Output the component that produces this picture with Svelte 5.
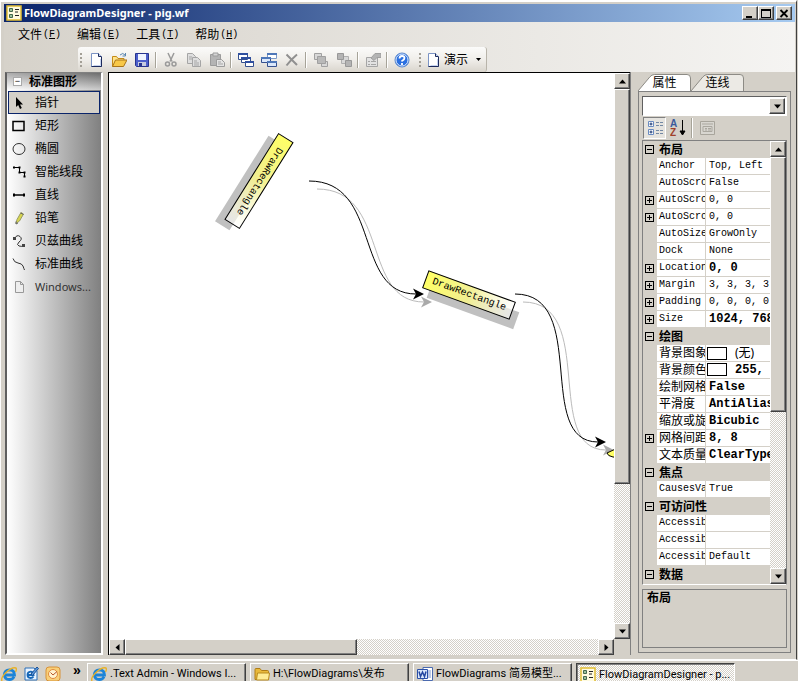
<script>
    let activeTool = $state(0);
    let activeTab = $state(0);

    const menus = [
        { label: '文件', key: 'F' },
        { label: '编辑', key: 'E' },
        { label: '工具', key: 'T' },
        { label: '帮助', key: 'H' }
    ];

    const toolbar = [
        ['new', 'open', 'save'],
        ['cut', 'copy', 'paste'],
        ['cascade', 'tile', 'delete'],
        ['front', 'back'],
        ['props'],
        ['help']
    ];

    const tools = [
        { icon: 'pointer', label: '指针' },
        { icon: 'rect', label: '矩形' },
        { icon: 'ellipse', label: '椭圆' },
        { icon: 'smart', label: '智能线段' },
        { icon: 'line', label: '直线' },
        { icon: 'pencil', label: '铅笔' },
        { icon: 'bezier', label: '贝兹曲线' },
        { icon: 'curve', label: '标准曲线' },
        { icon: 'page', label: 'Windows...' }
    ];

    const shapes = [
        { x: 150, y: 108, w: 101, h: 17, angle: 122, sx: -10, sy: 2 },
        { x: 360, y: 222, w: 92, h: 18, angle: 20, sx: 4, sy: 10 }
    ];

    const links = [
        { d: 'M200 108C273 108 244 221 307 221', x: 315, y: 221 },
        { d: 'M406 221C481 221 425 369 489 369', x: 497, y: 369 }
    ];

    const groups = [
        { name: '布局', rows: [
            { name: 'Anchor', value: 'Top, Left' },
            { name: 'AutoScroll', value: 'False' },
            { name: 'AutoScrollMargin', value: '0, 0', plus: true },
            { name: 'AutoScrollMinSize', value: '0, 0', plus: true },
            { name: 'AutoSizeMode', value: 'GrowOnly' },
            { name: 'Dock', value: 'None' },
            { name: 'Location', value: '0, 0', plus: true, bold: true },
            { name: 'Margin', value: '3, 3, 3, 3', plus: true },
            { name: 'Padding', value: '0, 0, 0, 0', plus: true },
            { name: 'Size', value: '1024, 768', plus: true, bold: true }
        ] },
        { name: '绘图', rows: [
            { name: '背景图象', value: '(无)', swatch: true, cjk: true },
            { name: '背景颜色', value: '255,', swatch: true, bold: true },
            { name: '绘制网格', value: 'False', bold: true },
            { name: '平滑度', value: 'AntiAlias', bold: true },
            { name: '缩放或旋转', value: 'Bicubic', bold: true },
            { name: '网格间距', value: '8, 8', plus: true, bold: true },
            { name: '文本质量', value: 'ClearType', bold: true }
        ] },
        { name: '焦点', rows: [
            { name: 'CausesValidation', value: 'True' }
        ] },
        { name: '可访问性', rows: [
            { name: 'AccessibleDescription', value: '' },
            { name: 'AccessibleName', value: '' },
            { name: 'AccessibleRole', value: 'Default' }
        ] },
        { name: '数据', rows: [] }
    ];

    const tasks = [
        { icon: 'ie', label: '.Text Admin - Windows I...' },
        { icon: 'folder', label: 'H:\\FlowDiagrams\\发布' },
        { icon: 'word', label: 'FlowDiagrams 简易模型...' },
        { icon: 'app', label: 'FlowDiagramDesigner - p...', active: true }
    ];
</script>

{#snippet icon(name)}
    <svg class="icon" width="16" height="16" viewBox="0 0 16 16" fill="none" aria-hidden="true">
        {#if name === 'new'}
            <path d="M3.5 1.5h7l3 3v10h-10z" fill="#fff" stroke="#7b93c4" />
            <path d="M13.5 5v9.5h-10" stroke="#1c2a5c" />
            <path d="M10.5 1.5v3h3" stroke="#1c2a5c" fill="#c9d6f2" />
            <path d="M12.5 7v6.500h-7" stroke="#c6d3ef" />
        {:else if name === 'open'}
            <path d="M1.500 14.500v-10h4l1.500 2h6v3" fill="#ffe48a" stroke="#c48a18" />
            <path d="M1.500 14.500l3-6.500h11.500l-3.500 6.500z" fill="#f8c848" stroke="#a8741a" />
            <path d="M9 3q3-3 5 0M14.500 1v3h-3" stroke="#5a86b0" />
        {:else if name === 'save'}
            <path d="M1.500 1.500h13v13h-12l-1-1z" fill="#4c5fcb" stroke="#27348f" />
            <path d="M4 2h8v6h-8z" fill="#eef3ff" />
            <path d="M4 10h8v4h-8z" fill="#c6cbe0" />
            <path d="M5 11h3v3h-3z" fill="#27348f" />
        {:else if name === 'cut'}
            <path d="M5 1l4 8.500M11 1l-4 8.500" stroke="#9a9a9a" stroke-width="1.500" />
            <circle cx="4.500" cy="12" r="2" stroke="#9a9a9a" stroke-width="1.500" />
            <circle cx="11" cy="12" r="2" stroke="#9a9a9a" stroke-width="1.500" />
        {:else if name === 'copy'}
            <path d="M1.500 1.500h5l3 3v7h-8z" fill="#dedede" stroke="#a5a5a5" />
            <path d="M6.500 5.500h5l3 3v6h-8z" fill="#dedede" stroke="#a5a5a5" />
            <path d="M3 5h3M3 7h3M8 9h3M8 11h5M8 13h5" stroke="#a5a5a5" />
        {:else if name === 'paste'}
            <path d="M1.500 2.500h10v11h-10z" fill="#b4b4b4" stroke="#9b9b9b" />
            <path d="M4 1h5v3h-5z" fill="#d5d5d5" stroke="#9b9b9b" />
            <path d="M7.500 7.500h5l3 3v4h-8z" fill="#e4e4e4" stroke="#9b9b9b" />
            <path d="M9 10h3M9 12h5" stroke="#a5a5a5" />
        {:else if name === 'cascade'}
            <path d="M0.500 1.500h9v6h-9zM3.500 5.500h9v5h-9zM7.500 9.500h8v5h-8z" fill="#fff" stroke="#35508e" />
            <path d="M0 2h10M3 6h10M7 10h9" stroke="#2f4f9f" stroke-width="2" />
        {:else if name === 'tile'}
            <path d="M6.500 1.500h9v5h-9z" fill="#fff" stroke="#7d9ac8" />
            <path d="M0.500 5.500h9v5h-9zM6.500 9.500h9v5h-9z" fill="#dbe8fb" stroke="#35508e" />
            <path d="M6 2h10M0 6h10M6 10h10" stroke="#4e77b8" stroke-width="2" />
        {:else if name === 'delete'}
            <path d="M2.500 2.500q5 5 10.500 10.500M13 2.500q-6 5-10.500 11" stroke="#909090" stroke-width="2" />
        {:else if name === 'front'}
            <path d="M1.500 1.500h7v6h-7zM8.500 9.500h6v5h-6z" fill="#d8d8d8" stroke="#a0a0a0" />
            <path d="M4.500 4.500h8v7h-8z" fill="#b9b9b9" stroke="#a0a0a0" />
        {:else if name === 'back'}
            <path d="M5.500 4.500h7v7h-7z" fill="#d8d8d8" stroke="#b0b0b0" />
            <path d="M1.500 1.500h6v6h-6zM9.500 8.500h6v6h-6z" fill="#b4b4b4" stroke="#989898" />
        {:else if name === 'props'}
            <path d="M1.500 5.500h11v9h-11z" fill="#e2e2e2" stroke="#a5a5a5" />
            <path d="M3 9.500h2M3 12.500h2M6 9.500h5M6 12.500h5" stroke="#a5a5a5" />
            <path d="M6 6l4-4.500h6v4h-4l-3 3z" fill="#b4b4b4" stroke="#a0a0a0" />
        {:else if name === 'help'}
            <circle cx="8" cy="8" r="7" fill="#2a6fe0" stroke="#5b87c9" />
            <circle cx="8" cy="8" r="6" stroke="#dceaff" />
            <path d="M5.500 6.500q0-2.500 2.500-2.500t2.500 2q0 1.500-2.500 3v.5M8 11v2" stroke="#fff" stroke-width="1.800" />
        {:else if name === 'pointer'}
            <path d="M5 2v10l2.200-2 1.800 4 1.800-1-1.800-3.600h3z" fill="#000" />
        {:else if name === 'rect'}
            <path d="M2 3.500h11v9h-11z" stroke="#000" stroke-width="1.500" />
        {:else if name === 'ellipse'}
            <ellipse cx="8" cy="8" rx="6" ry="5.500" stroke="#333" />
        {:else if name === 'smart'}
            <path d="M3 3.500h5.500v5h5v4" stroke="#000" />
            <path d="M2 2.500h2v2h-2zM7.500 2.500h2v2h-2zM7.500 7.500h2v2h-2zM12.500 7.500h2v2h-2zM12.500 11.500h2v2h-2z" fill="#000" />
        {:else if name === 'line'}
            <path d="M3 8h11" stroke="#000" stroke-width="1.500" />
            <path d="M2 6.500h2v3h-2zM12 6.500h2v3h-2z" fill="#000" />
        {:else if name === 'pencil'}
            <path d="M5 13.500l1-4 4-7 2.500 1.500-4 7z" fill="#d8d64e" stroke="#999c60" />
            <path d="M9.500 3l3 1.500M5 11.500v2.500l2-1" stroke="#666" />
        {:else if name === 'bezier'}
            <path d="M3 6q3-5 6-2.500t-1 5.500q-3 3 0 4t5-.5" stroke="#333" />
            <path d="M2 4h3v3h-3zM11 11h3v3h-3z" fill="#444" />
        {:else if name === 'curve'}
            <path d="M2 2.500q1 4 5 4.500t5 3q1 3 1.500 4" stroke="#333" />
        {:else if name === 'page'}
            <path d="M4.500 2.500h5l3 3v8h-8zM9.500 2.500v3h3" fill="#eee" stroke="#999" />
        {:else if name === 'ie'}
            <path d="M3 9h10.500q0-5-5-5.200-5 .2-5.200 5 .2 4.700 5 4.700 3.500 0 4.700-2.800" stroke="#1c84d8" stroke-width="2.800" />
            <path d="M1 15q-1.500-3 3.500-8 7-6.500 10.500-5 1 1-.5 4" stroke="#e8b22a" stroke-width="1.400" />
        {:else if name === 'edit'}
            <path d="M2 2h9l3 3v9h-12z" fill="#e8f3ff" stroke="#2a6fb8" />
            <path d="M4.500 9h6q-.5-3.500-3-3.300-3 .3-3 3.300.2 3 3 3 2 0 3-1.500" stroke="#1667b7" stroke-width="1.800" />
            <path d="M8 8l6-7 1.500 1.500-6 7z" fill="#5a9ae0" stroke="#1d4f90" />
        {:else if name === 'outlook'}
            <rect x="1" y="1" width="14" height="14" rx="3" fill="#f8cf78" stroke="#d79238" />
            <circle cx="8" cy="8" r="4.500" fill="#fff3cf" stroke="#e08a3c" />
            <path d="M5.500 6.500l2.500 2.500 4-3.500" stroke="#b8562a" />
        {:else if name === 'folder'}
            <path d="M1 13.500v-10q0-1 1-1h4l1.500 2h6q1 0 1 1v8z" fill="#e9b93a" stroke="#b07d16" />
            <path d="M2.500 14l1-7h12l-1 7z" fill="#ffec94" stroke="#b98a1e" />
        {:else if name === 'word'}
            <path d="M6 1.500h9.500v13h-9.500z" fill="#fff" stroke="#4b6aaf" />
            <path d="M11 5h3M11 7h3M11 9h3M11 11h3" stroke="#7a93cc" />
            <path d="M0.500 3.500h10v9h-10z" fill="#dce8fb" stroke="#2b50a8" />
            <path d="M2 5.500l1.500 5 2-4.500 2 4.500 1.500-5" stroke="#2447a0" stroke-width="1.500" />
        {:else if name === 'app'}
            <path d="M1 1h14v14h-14z" fill="#fffbe0" stroke="#e2bf35" stroke-width="1.500" />
            <path d="M3.500 3.500h3v3h-3zM3.500 9.500h3v3h-3z" fill="#9bc29b" stroke="#45684d" />
            <path d="M9 4.500h4M9 7h3M9 10.500h4" stroke="#222" />
        {:else if name === 'category'}
            <path d="M1.500 1.500h5v5h-5zM1.500 9.500h5v5h-5z" fill="#fff" stroke="#6a8bc0" />
            <path d="M2.500 4h3M4 2.500v3M2.500 12h3M4 10.500v3" stroke="#12306e" />
            <path d="M9 2.500h3M13 2.500h3M9 5.500h3M13 5.500h3M9 10.500h3M13 10.500h3M9 13.500h3M13 13.500h3" stroke="#7388a3" />
        {:else if name === 'page2'}
            <path d="M1.500 1.500h14v13h-14z" fill="#d8d6d0" stroke="#a8a59c" />
            <path d="M4 6.500h9v5h-9zM3 4h11M6 8.500h2M9 8.500h3M6 10h2M9 10h3" stroke="#aaa79f" />
        {/if}
    </svg>
{/snippet}

{#snippet arrow(dir)}
    <svg width="7" height="7" viewBox="0 0 7 7" fill="#000" aria-hidden="true">
        {#if dir === 'up'}<path d="M0 5.500h7l-3.500-4z" />
        {:else if dir === 'down'}<path d="M0 1.500h7l-3.500 4z" />
        {:else if dir === 'left'}<path d="M5.500 0v7l-4-3.500z" />
        {:else}<path d="M1.500 0v7l4-3.500z" />{/if}
    </svg>
{/snippet}

{#snippet scrollbar(vertical, size)}
    <div class="scroll" class:vertical>
        <button class="raised" aria-label="back">{@render arrow(vertical ? 'up' : 'left')}</button>
        <div class="track">
            <div class="thumb raised" style="flex-basis: {size}%"></div>
        </div>
        <button class="raised" aria-label="forward">{@render arrow(vertical ? 'down' : 'right')}</button>
    </div>
{/snippet}

<div class="desktop">
    <div class="window">
        <header class="titlebar">
            {@render icon('app')}
            <h1>FlowDiagramDesigner - pig.wf</h1>
            <button class="raised" aria-label="Minimize"><svg width="10" height="9"><path d="M1 7h6v2h-6z" /></svg></button>
            <button class="raised" aria-label="Maximize"><svg width="10" height="9"><path d="M0 0h10v9h-10zM1 2v6h8v-6z" fill-rule="evenodd" /></svg></button>
            <button class="raised close" aria-label="Close"><svg width="10" height="9"><path d="M1.500 1l7 7M8.500 1l-7 7" stroke="#000" stroke-width="1.800" /></svg></button>
        </header>

        <div class="bars">
            <nav class="menu">
                {#each menus as menu}
                    <button>{menu.label} <span class="mono">(<u>{menu.key}</u>)</span></button>
                {/each}
            </nav>
            <div class="toolbar">
                <span class="grip"></span>
                {#each toolbar as group, i}
                    {#if i > 0}<span class="sep"></span>{/if}
                    {#each group as name}
                        <button aria-label={name}>{@render icon(name)}</button>
                    {/each}
                {/each}
                <span class="grip second"></span>
                <button class="demo">{@render icon('new')}演示<svg width="5" height="3"><path d="M0 0h5l-2.500 3z" /></svg></button>
            </div>
        </div>

        <main>
            <aside class="palette">
                <h2><span class="fold">−</span>标准图形</h2>
                {#each tools as tool, i}
                    <button class:selected={activeTool === i} onclick={() => activeTool = i}>
                        {@render icon(tool.icon)}{tool.label}
                    </button>
                {/each}
            </aside>

            <section class="editor">
                <div class="canvas">
                    <svg width="100%" height="100%">
                        <defs>
                            <linearGradient id="fill">
                                <stop offset="0" stop-color="#ffff66" />
                                <stop offset="0.5" stop-color="#f3f08f" stop-opacity="0.95" />
                                <stop offset="1" stop-color="#fff" stop-opacity="0.6" />
                            </linearGradient>
                        </defs>
                        {#each shapes as s}
                            <rect class="shadow" x={-s.w / 2} y={-s.h / 2} width={s.w} height={s.h}
                                transform="translate({s.x + s.sx} {s.y + s.sy}) rotate({s.angle})" />
                            <g transform="translate({s.x} {s.y}) rotate({s.angle})">
                                <rect x={-s.w / 2} y={-s.h / 2} width={s.w} height={s.h} fill="url(#fill)" stroke="#000" />
                                <text y="2" text-anchor="middle">DrawRectangle</text>
                            </g>
                        {/each}
                        {#each links as link}
                            <g transform="translate(8 8)">
                                <path class="wire" d={link.d} stroke="#bbb" />
                                <path d="M0 0l-11-5.500 3 5.500-3 5.500z" fill="#aaa" transform="translate({link.x} {link.y})" />
                            </g>
                            <path class="wire" d={link.d} stroke="#000" />
                            <path d="M0 0l-11-5.500 3 5.500-3 5.500z" transform="translate({link.x} {link.y})" />
                        {/each}
                        <path d="M520 372q-14 3-22 8 1 6 22 4" fill="#ffff66" stroke="#000" />
                    </svg>
                </div>
                {@render scrollbar(true, 74)}
                {@render scrollbar(false, 49)}
            </section>

            <aside class="side">
                <div class="tabs">
                    {#each ['属性', '连线'] as tab, i}
                        <button class:active={activeTab === i} onclick={() => activeTab = i}>
                            <svg width="100%" height="100%" viewBox="0 0 54 17" preserveAspectRatio="none" aria-hidden="true">
                                <path d="M0 17L12 3Q14 .5 17 .5H50Q53.500 .5 53.500 4V17" />
                            </svg>
                            <span>{tab}</span>
                        </button>
                    {/each}
                </div>
                <div class="panel">
                    <div class="combo">
                        <select aria-label="object"><option></option></select>
                        <span class="raised drop">{@render arrow('down')}</span>
                    </div>
                    <div class="gridbar">
                        <button class="pressed" aria-label="Categorized">{@render icon('category')}</button>
                        <button aria-label="Alphabetical">
                            <svg width="16" height="18" aria-hidden="true">
                                <text class="az" x="0" y="8" fill="#3a5a9c">A</text>
                                <text class="az" x="0" y="17" fill="#a0402a">Z</text>
                                <path d="M12.500 1v14M10 12l2.500 4 2.500-4z" stroke="#000" />
                            </svg>
                        </button>
                        <span class="sep"></span>
                        <button aria-label="Property pages">{@render icon('page2')}</button>
                    </div>
                    <div class="grid">
                        <table>
                            <colgroup><col class="c1"><col class="c2"><col></colgroup>
                            {#each groups as group}
                                <tbody>
                                    <tr class="category">
                                        <td><span class="box"></span></td>
                                        <th colspan="2">{group.name}</th>
                                    </tr>
                                    {#each group.rows as row}
                                        <tr>
                                            <td>{#if row.plus}<span class="box plus"></span>{/if}</td>
                                            <th class:mono={row.name.charCodeAt(0) < 256}>{row.name}</th>
                                            <td class="value" class:mono={!row.cjk} class:bold={row.bold} class:swatched={row.swatch}>
                                                {#if row.swatch}<span class="swatch"></span>{/if}{row.value}
                                            </td>
                                        </tr>
                                    {/each}
                                </tbody>
                            {/each}
                        </table>
                        {@render scrollbar(true, 62)}
                    </div>
                    <div class="description">布局</div>
                </div>
            </aside>
        </main>
    </div>

    <footer class="taskbar">
        <div class="quick">
            <button aria-label="Internet Explorer">{@render icon('ie')}</button>
            <button aria-label="Editor">{@render icon('edit')}</button>
            <button aria-label="Outlook">{@render icon('outlook')}</button>
            <span class="more">»</span>
        </div>
        {#each tasks as task}
            <button class="task raised" class:active={task.active}>
                {@render icon(task.icon)}<span>{task.label}</span>
            </button>
        {/each}
    </footer>
</div>

<style>
    :global(body) {
        margin: 0;
    }

    .desktop {
        --face: #d4d0c8;
        --check: repeating-conic-gradient(#fff 0 25%, #d4d0c8 0 50%) 0 0 / 2px 2px;
        display: flex;
        flex-direction: column;
        height: 100vh;
        background: var(--face);
        color: #000;
        font: 12px/16px "Noto Sans", "Noto Sans CJK SC", sans-serif;
        overflow: hidden;
    }

    button {
        display: flex;
        align-items: center;
        justify-content: center;
        box-sizing: border-box;
        padding: 0;
        border: none;
        background: none;
        color: inherit;
        font: inherit;
        white-space: nowrap;
    }

    svg {
        flex: none;
        display: block;
    }

    .raised {
        box-sizing: border-box;
        background: var(--face);
        border: 1px solid;
        border-color: #fff #404040 #404040 #fff;
        box-shadow: inset -1px -1px #808080;
    }

    .mono {
        font-family: "Liberation Mono", "Noto Sans CJK SC", monospace;
        font-size: 10px;
    }

    .window {
        flex: 1;
        min-height: 0;
        display: flex;
        flex-direction: column;
        margin-right: 1px;
        padding: 2px 1px 4px 3px;
        border: 1px solid;
        border-color: #fff #404040 #fff #fff;
        border-top-width: 2px;
    }

    /* title bar */
    .titlebar {
        display: flex;
        align-items: center;
        height: 18px;
        flex: none;
        padding: 0 3px 0 2px;
        background: linear-gradient(90deg, #0a246a, #a6caf0);
    }

    h1 {
        flex: 1;
        margin: 0 0 0 2px;
        color: #fff;
        font: bold 11px/18px "Noto Sans", sans-serif;
    }

    .titlebar button {
        width: 16px;
        height: 14px;
    }

    .titlebar .close {
        margin-left: 2px;
    }

    /* menu and toolbar */
    .bars {
        flex: none;
        background: linear-gradient(90deg, #d6d2ca, #f5f4f2);
    }

    .menu {
        display: flex;
        gap: 16px;
        height: 25px;
        padding-left: 14px;
    }

    .menu span {
        margin-left: 1px;
    }

    .toolbar {
        display: flex;
        align-items: center;
        width: fit-content;
        height: 25px;
        margin-left: 74px;
        border-radius: 3px;
        border-right: 1px solid #b8b4aa;
        box-sizing: border-box;
        background: linear-gradient(#fbfbfa, #f0eeea 50%, #d9d5cd);
    }

    .toolbar button {
        width: 23px;
        height: 23px;
    }

    .toolbar .demo {
        width: auto;
        gap: 3px;
        padding-right: 5px;
    }

    .demo svg:last-child {
        margin-left: 5px;
    }

    .grip {
        width: 2px;
        height: 14px;
        margin: 0 2px;
        background: repeating-linear-gradient(#a39f96 0 2px, transparent 2px 4px);
    }

    .second {
        margin: 0 4px 0 6px;
    }

    .sep {
        width: 1px;
        height: 16px;
        margin: 0 2px;
        background: #a6a398;
        border-right: 1px solid #fff;
    }

    main {
        flex: 1;
        min-height: 0;
        display: flex;
    }

    /* shape palette */
    .palette {
        width: 94px;
        flex: none;
        margin: 0 5px 0 1px;
        border: 2px solid;
        border-color: #808080 #fff #fff #606060;
        border-top-width: 1px;
        background: linear-gradient(90deg, #fff, #808080);
    }

    .palette button:last-child {
        color: #333;
        font-size: 11px;
    }

    h2 {
        display: flex;
        align-items: center;
        gap: 7px;
        height: 17px;
        margin: 0 0 1px;
        padding-left: 6px;
        font-size: 12px;
        line-height: 17px;
        background: linear-gradient(rgba(90, 90, 90, 0.5), rgba(255, 255, 255, 0.6));
    }

    .fold {
        width: 7px;
        height: 7px;
        background: #fff;
        border: 1px solid #aaa;
        font: 9px/6px "Liberation Sans", sans-serif;
        text-align: center;
    }

    .palette button {
        justify-content: flex-start;
        gap: 8px;
        width: calc(100% - 2px);
        height: 23px;
        margin-left: 1px;
        padding-left: 2px;
        border: 1px solid transparent;
    }

    .palette .selected {
        border-color: #0a246a;
        background: var(--face);
    }

    /* drawing area */
    .editor {
        flex: 1;
        min-width: 0;
        display: grid;
        grid-template-columns: 1fr 16px;
        grid-template-rows: 1fr 16px;
        border: 1px solid #000;
        border-width: 1px 0 0 1px;
    }

    .canvas {
        min-height: 0;
        overflow: hidden;
        background: #fff;
    }

    .canvas text {
        font: 10px "Liberation Mono", monospace;
    }

    .shadow {
        fill: #c0c0c0;
    }

    .wire {
        fill: none;
    }

    .scroll {
        display: flex;
        flex: none;
        background: var(--check);
    }

    .scroll button {
        flex: none;
        width: 16px;
        height: 16px;
    }

    .track {
        flex: 1;
        display: flex;
        min-height: 0;
    }

    .vertical, .vertical .track {
        flex-direction: column;
    }

    /* property side */
    .side {
        display: flex;
        flex-direction: column;
        width: 153px;
        flex: none;
        padding: 2px 4px 2px 7px;
        border-left: 1px solid #808080;
    }

    .tabs {
        display: flex;
        height: 17px;
    }

    .tabs button {
        position: relative;
        width: 53px;
    }

    .tabs svg {
        position: absolute;
        inset: 0;
    }

    .tabs path {
        fill: #eceae5;
        stroke: #8c8a84;
    }

    .tabs .active path {
        fill: #fff;
    }

    .tabs span {
        position: relative;
    }

    .panel {
        flex: 1;
        min-height: 0;
        display: flex;
        flex-direction: column;
        padding: 4px 3px 4px 3px;
        border: 1px solid #808080;
    }

    .combo {
        position: relative;
        height: 18px;
        border: 1px solid;
        border-color: #606060 #fff #fff #606060;
        background: #fff;
    }

    .combo select {
        appearance: none;
        width: 100%;
        height: 100%;
        border: none;
        background: none;
    }

    .drop {
        position: absolute;
        top: 1px;
        right: 1px;
        bottom: 1px;
        width: 16px;
        display: flex;
        align-items: center;
        justify-content: center;
        pointer-events: none;
    }

    .gridbar {
        display: flex;
        align-items: center;
        height: 24px;
        padding-left: 1px;
    }

    .gridbar button {
        width: 23px;
        height: 22px;
    }

    .gridbar .sep {
        height: 20px;
    }

    .gridbar .pressed {
        border: 1px solid;
        border-color: #808080 #fff #fff #808080;
        background: #e6e4df;
    }

    .az {
        font: bold 10px "Liberation Sans", sans-serif;
    }

    .grid {
        flex: 1;
        min-height: 0;
        display: flex;
        border: 1px solid #808080;
        border-bottom-color: #fff;
        overflow: hidden;
    }

    table {
        flex: 1;
        min-width: 0;
        width: 0;
        height: fit-content;
        table-layout: fixed;
        border-spacing: 0;
    }

    .c1 {
        width: 14px;
    }

    .c2 {
        width: 49px;
    }

    td, th {
        box-sizing: border-box;
        height: 17px;
        padding: 0;
        overflow: hidden;
        white-space: nowrap;
        line-height: 16px;
        text-align: left;
    }

    th {
        padding-left: 2px;
        font-weight: normal;
        background: #fff;
        border: 1px solid var(--face);
        border-width: 0 1px 1px 0;
    }

    .value {
        padding-left: 3px;
        background: #fff;
        border-bottom: 1px solid var(--face);
    }

    .bold {
        font-size: 12px;
        font-weight: bold;
    }

    .swatched {
        padding-left: 1px;
    }

    .category th {
        border: none;
        background: var(--face);
        font-weight: bold;
    }

    .box {
        display: block;
        box-sizing: border-box;
        width: 9px;
        height: 9px;
        margin-left: 2px;
        border: 1px solid #000;
        background: linear-gradient(#000, #000) center / 5px 1px no-repeat;
    }

    .plus {
        background: linear-gradient(#000, #000) center / 5px 1px no-repeat, linear-gradient(#000, #000) center / 1px 5px no-repeat;
    }

    .swatch {
        display: inline-block;
        box-sizing: border-box;
        width: 20px;
        height: 13px;
        margin-right: 8px;
        border: 1px solid #000;
        vertical-align: middle;
    }

    .description {
        box-sizing: border-box;
        height: 59px;
        flex: none;
        margin-top: 4px;
        padding-left: 4px;
        border: 1px solid #808080;
        font-weight: bold;
    }

    /* taskbar */
    .taskbar {
        display: flex;
        gap: 4px;
        flex: none;
        height: 18px;
        padding-top: 2px;
        border-top: 1px solid #fff;
        font-family: Roboto, "Noto Sans CJK SC", sans-serif;
        font-size: 11px;
    }

    .quick {
        display: flex;
        gap: 6px;
        width: 82px;
        flex: none;
        height: 22px;
        padding-left: 1px;
    }

    .quick button {
        width: 16px;
        height: 22px;
    }

    .more {
        margin-left: 6px;
        font: bold 14px/14px "Liberation Sans", sans-serif;
    }

    .task {
        flex: 0 1 159px;
        min-width: 0;
        height: 24px;
        justify-content: flex-start;
        gap: 3px;
        padding: 0 3px 2px;
        overflow: hidden;
    }

    .task.active {
        padding-top: 2px;
        background: var(--check);
        border-color: #404040 #fff #fff #404040;
        box-shadow: inset 1px 1px #808080;
    }
</style>
